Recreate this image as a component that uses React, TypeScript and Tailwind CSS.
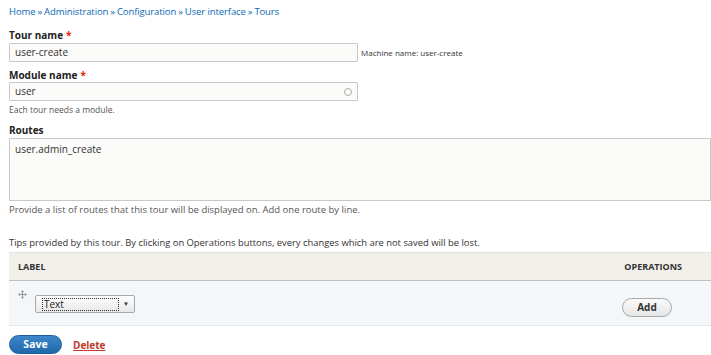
import React from 'react';

const font = { fontFamily: '"Open Sans", "Liberation Sans", sans-serif' };

function Crumbs() {
  const items = ['Home', 'Administration', 'Configuration', 'User interface', 'Tours'];
  return (
    <nav className="flex items-center h-[12px] text-[9.5px] text-[#0a6ab5] leading-[12px] tracking-[-0.1px]">
      {items.map((it, i) => (
        <span key={it} className="flex items-center">
          {i > 0 && <span className="px-[2px]">»</span>}
          <a href="#">{it}</a>
        </span>
      ))}
    </nav>
  );
}

function Label({ children, required }: { children: React.ReactNode; required?: boolean }) {
  return (
    <div className="h-[12px] text-[10px] font-bold text-[#222] leading-[12px]">
      {children}
      {required && <span className="text-[#e62600] ml-[3px]">*</span>}
    </div>
  );
}

function DragHandle() {
  return (
    <svg width="9" height="9" viewBox="0 0 11 11" className="text-[#9a9a9a]">
      <path d="M5.5 0 L7.5 2.5 H6.2 V4.8 H8.5 V3.5 L11 5.5 L8.5 7.5 V6.2 H6.2 V8.5 H7.5 L5.5 11 L3.5 8.5 H4.8 V6.2 H2.5 V7.5 L0 5.5 L2.5 3.5 V4.8 H4.8 V2.5 H3.5 Z" fill="currentColor" />
    </svg>
  );
}

export default function App() {
  return (
    <div className="w-[711px] h-[355px] overflow-hidden bg-white pl-[9px] pt-[6px] text-[#333]" style={font}>
      <Crumbs />

      <div className="mt-[11px]">
        <Label required>Tour name</Label>
        <div className="mt-[2px] flex items-center">
          <div className="w-[349px] h-[19px] border border-[#c8c8c4] bg-[#fbfbf9] rounded-[1px] px-[5px] flex items-center text-[10px] text-[#333]">
            user-create
          </div>
          <span className="ml-[3px] text-[8px] text-[#333]">Machine name: user-create</span>
        </div>
      </div>

      <div className="mt-[7px]">
        <Label required>Module name</Label>
        <div className="mt-[1px] w-[349px] h-[19px] border border-[#c8c8c4] bg-[#fbfbf9] rounded-[1px] px-[5px] flex items-center justify-between text-[10px] text-[#333]">
          <span>user</span>
          <span className="w-[8px] h-[8px] rounded-full border border-[#aaa]" />
        </div>
        <div className="mt-[3px] h-[12px] leading-[12px] text-[8.5px] text-[#555]">Each tour needs a module.</div>
      </div>

      <div className="mt-[8px]">
        <Label>Routes</Label>
        <div className="mt-[2px] w-[702px] h-[63px] border border-[#c8c8c4] bg-[#fbfbf9] px-[5px] pt-[3px] text-[10px] text-[#333]">
          user.admin_create
        </div>
        <div className="mt-[3px] h-[12px] leading-[12px] text-[9.5px] text-[#555]">
          Provide a list of routes that this tour will be displayed on. Add one route by line.
        </div>
      </div>

      <div className="mt-[21px] h-[12px] leading-[12px] text-[9.4px] text-[#333]">
        Tips provided by this tour. By clicking on Operations buttons, every changes which are not saved will be lost.
      </div>

      <div className="mt-[3px] w-[702px]">
        <div className="h-[29px] flex items-center justify-between bg-[#f0efea] border-t border-[#e2e1dc] border-b border-b-[#bfbfba] pl-[9px] pr-[29px] text-[9px] font-bold text-[#333]">
          <span>LABEL</span>
          <span>OPERATIONS</span>
        </div>
        <div className="h-[45px] flex justify-between bg-[#f3f7fa] border-b border-[#e4e8ea]">
          <div className="flex pl-[9px] pt-[9px]">
            <DragHandle />
            <div className="ml-[8px] mt-[5px] w-[100px] h-[18px] rounded-[2px] border border-[#a9a9a9] bg-gradient-to-b from-[#fdfdfd] to-[#e9e9e9] flex items-center pl-[6px] pr-[1px]">
              <span className="w-[77px] h-[13px] border border-dotted border-[#333] text-[10px] leading-[11px] text-[#222] pl-[1px]">Text</span>
              <span className="flex-1 text-center text-[6px] text-[#333]">▼</span>
            </div>
          </div>
          <div className="pr-[39px] pt-[12px]">
            <button className="w-[50px] h-[19px] rounded-full border border-[#a8a8a8] bg-gradient-to-b from-[#fafafa] to-[#e6e6e6] text-[10px] font-bold leading-none text-[#333]">
              Add
            </button>
          </div>
        </div>
      </div>

      <div className="mt-[9px] flex items-center">
        <button className="w-[53px] h-[19px] rounded-full bg-gradient-to-b from-[#3c87c9] to-[#1f68ac] border border-[#1b5f9e] text-white text-[10.5px] font-bold leading-none">
          Save
        </button>
        <a href="#" className="ml-[11px] text-[10px] font-bold text-[#c0392b] underline leading-none">Delete</a>
      </div>
    </div>
  );
}
